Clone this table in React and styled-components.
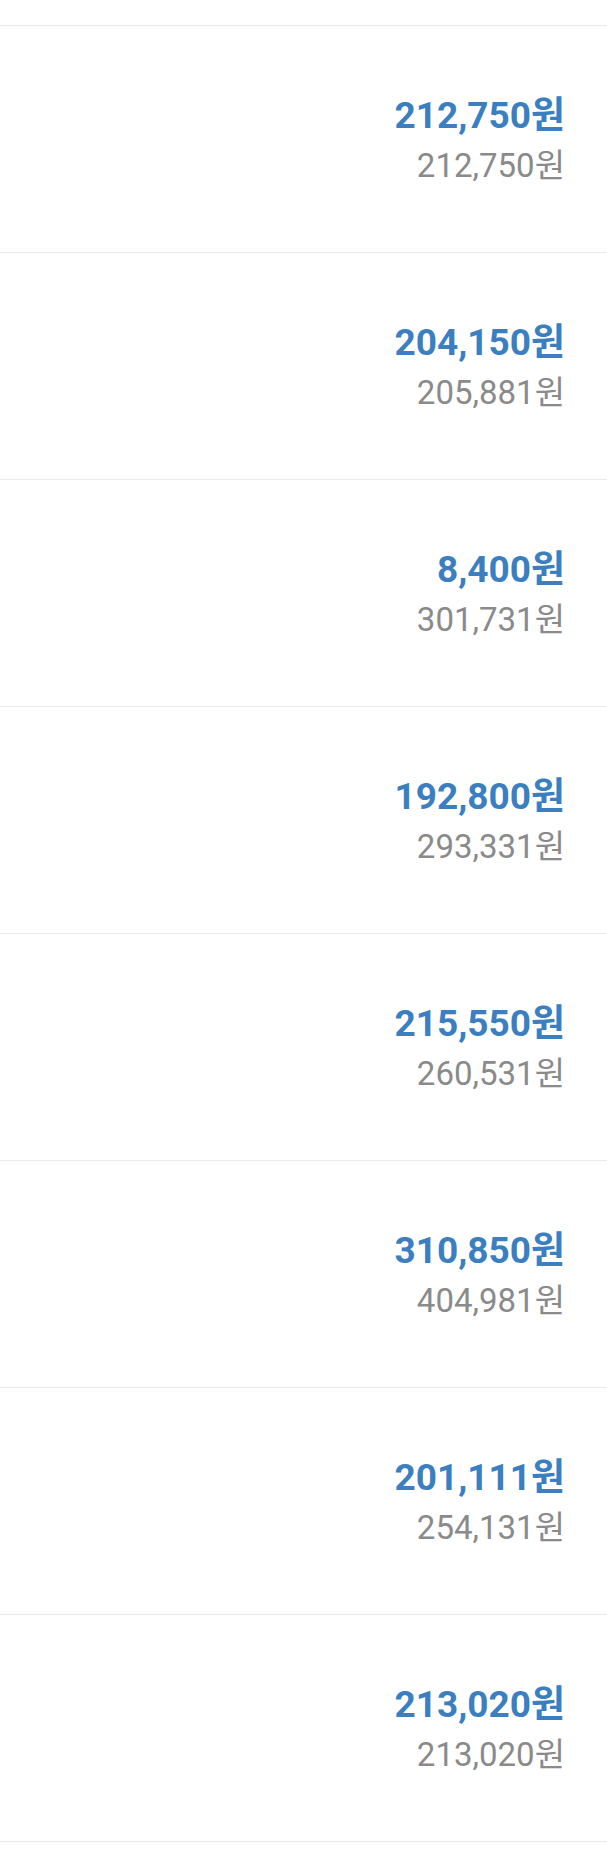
import React from "react";
import styled, { createGlobalStyle } from "styled-components";

const GlobalStyle = createGlobalStyle`
  html, body {
    margin: 0;
    padding: 0;
    background: #ffffff;
  }
  body {
    font-family: Roboto, "Noto Sans CJK KR", sans-serif;
  }
`;

const List = styled.div`
  display: flex;
  flex-direction: column;
  padding-top: 25px;
`;

const Row = styled.div`
  height: 226px;
  border-top: 1px solid #ebebeb;
  display: flex;
  flex-direction: column;
  align-items: flex-end;
  justify-content: center;
  padding-right: 42px;
  box-sizing: content-box;

  &:last-child {
    border-bottom: 1px solid #ebebeb;
  }
`;

const Amount = styled.div`
  font-size: 37px;
  font-weight: 700;
  line-height: 43px;
  color: #3b7fc0;
`;

const SubAmount = styled.div`
  font-size: 33px;
  font-weight: 400;
  line-height: 39px;
  color: #8a8a8a;
  margin-top: 9px;
`;

const rows = [
  ["212,750", "212,750"],
  ["204,150", "205,881"],
  ["8,400", "301,731"],
  ["192,800", "293,331"],
  ["215,550", "260,531"],
  ["310,850", "404,981"],
  ["201,111", "254,131"],
  ["213,020", "213,020"],
];

function App() {
  return (
    <>
      <GlobalStyle />
      <List>
        {rows.map(([paid, total], i) => (
          <Row key={i}>
            <Amount>{paid}원</Amount>
            <SubAmount>{total}원</SubAmount>
          </Row>
        ))}
      </List>
    </>
  );
}

export default App;
